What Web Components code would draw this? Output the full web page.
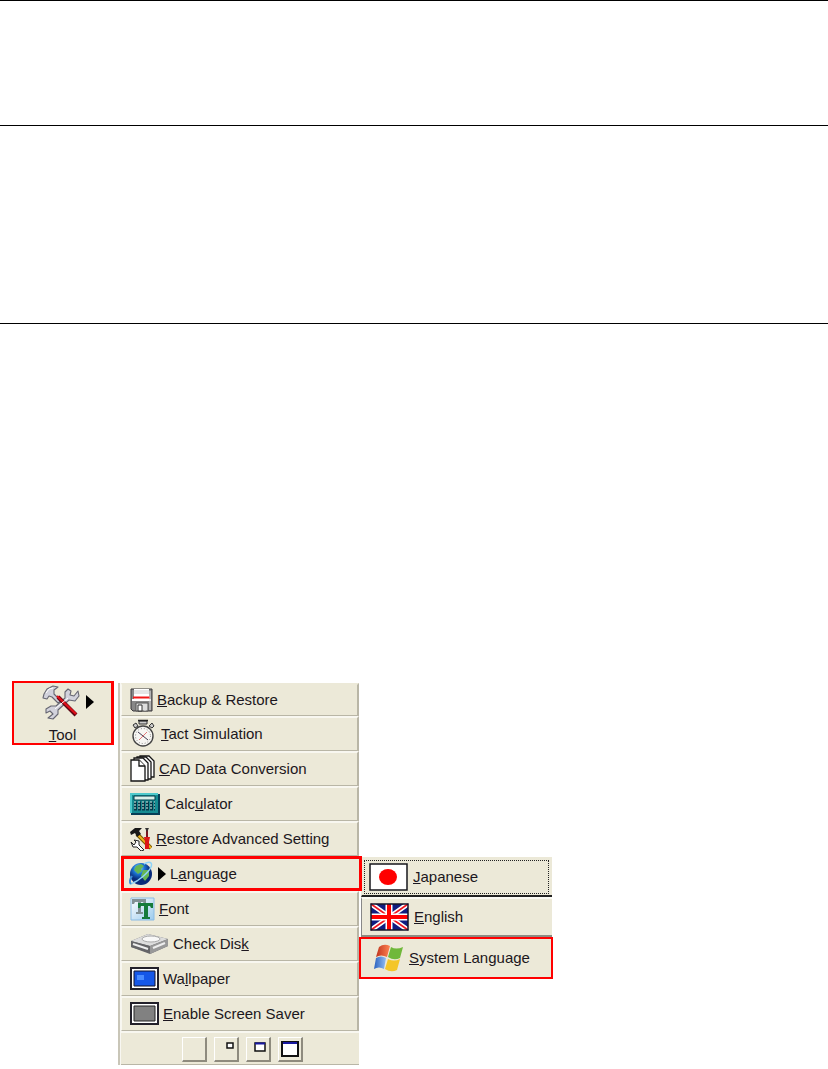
<!DOCTYPE html>
<html lang="en">
<head>
<meta charset="utf-8">
<title>Tool menu – Language</title>
<style>
  body { margin: 0; background: #fff; color: #1c1720; font: 15px/20px "Liberation Sans", Arial, sans-serif; }
</style>
</head>
<body>
<manual-page></manual-page>
<script>
const ICONS = {
  wrench: [40, 36, `<g stroke="#666672" stroke-width="1.1" fill="#d2d2dc" stroke-linejoin="round">
    <path d="M3 10 6 5 12 2 17 3 13 6 13 10 17 14 20 17 17 19 11 13 8 12 6 15 2 14Z"/>
    <path d="M27 5 30 7 29 11 33 12 37 7 38 12 34 17 28 16 17 26 17 30 12 35 7 34 12 30 9 27 5 29 5 25 10 22 15 22 24 14 24 8Z"/></g>
    <path d="M17 13 35 31" stroke="#5c0614" stroke-width="4"/><path d="M16 12 35 30" stroke="#df1019" stroke-width="2.4"/>
    <path d="M5 9 8 5 12 4M14 25 27 14" stroke="#fff" fill="none"/>`],
  floppy: [23, 24, `<path d="M1 1H22V23H3L1 21Z" fill="#888" stroke="#39373b"/><path d="M4 1H19V12H4Z" fill="#fff"/><path d="M4 3H19M4 5H19" stroke="#ccc"/><path d="M3 9.5H20" stroke="#f21818" stroke-width="2"/><path d="M2 12H21" stroke="#fff" stroke-width="2"/><path d="M6 15H18V23H6Z" fill="#ddd" stroke="#555"/><path d="M8 17H12V23H8Z" fill="#fff" stroke="#333"/><path d="M15 16V23M20 3V22" stroke="#ddd"/>`],
  watch: [27, 29, `<path d="M9 2H17V5H9ZM3 6 6 4 8 7 5 9ZM19 7 22 4 24 7 22 9Z" fill="#ccc" stroke="#333"/><circle cx="13" cy="17" r="10" fill="#f7f6f3" stroke="#444" stroke-width="1.4"/><circle cx="13" cy="17" r="7.5" fill="none" stroke="#888" stroke-dasharray="1 2"/><path d="m8 13 10 8" stroke="#433a50"/><path d="m9 21 8-8" stroke="#e37878"/><path d="M8 1.5H18" stroke="#222" stroke-width="1.5"/>`],
  pages: [25, 27, `<g fill="#fff" stroke="#151515" stroke-width="1.3"><path d="M10 1H19L24 6V22H10Z"/><path d="M7 2H16L21 7V24H7Z"/><path d="M4 3H13L18 8V25H4Z"/><path d="M1 5H9L15 11V26H1Z"/><path d="M9 5V11H15"/></g>`],
  calculator: [31, 22, `<path d="M1 1H28V20H1Z" fill="#168c92"/><path d="M1 20V1H28" fill="none" stroke="#4fc9cc" stroke-width="2"/><path d="M1 21H29V1" fill="none" stroke="#073e56" stroke-width="2"/><path d="M4 3H25V7H4Z" fill="#d9efea" stroke="#033c4b"/><path d="M4 10H25M4 13H25M4 16H25" stroke="#06384a" stroke-width="3" stroke-dasharray="3 1"/><path d="M4 9H25M4 12H25M4 15H25" stroke="#dff9ed" stroke-dasharray="2 2"/>`],
  hammer: [22, 24, `<path d="M7 7 21 21" stroke="#755a00" stroke-width="4"/><path d="M7 7 21 21" stroke="#efb31d" stroke-width="2"/><path d="M0 5 5 1H12L9 4 11 7 7 10 5 6 1 8Z" fill="#181818"/><path d="M1 15 4 18 6 15 4 13 9 14 9 18 14 23 11 24 7 20 3 20Z" fill="#fff" stroke="#222"/><path d="M17 3V12" stroke="#7a1721" stroke-width="2"/><path d="M14 10H20L19 15V22H15V15Z" fill="#dd1717"/><path d="M15 1H19L17 5Z" fill="#333"/>`],
  globe: [25, 26, `<defs><radialGradient id="sea" cx=".4" cy=".25"><stop stop-color="#9de2ff"/><stop offset=".5" stop-color="#1c76d4"/><stop offset="1" stop-color="#082b79"/></radialGradient></defs><circle cx="12" cy="13" r="11" fill="url(#sea)"/><path d="M7 5 12 3 15 5 12 8 13 10 9 13 5 9ZM14 9 20 9 20 15 16 20 12 15Z" fill="#65b653"/><path d="M15 3C20 0 24 1 22 6S10 20 2 23" fill="none" stroke="#8fd4f8" stroke-width="1.5"/><path d="M2 23C0 21 1 18 3 15" fill="none" stroke="#3a8cd8" stroke-width="2"/>`],
  font: [25, 24, `<defs><linearGradient id="tile" x2="1" y2="1"><stop stop-color="#fff"/><stop offset="1" stop-color="#9ccbed"/></linearGradient></defs><path d="M1 1H24V23H1Z" fill="url(#tile)" stroke="#8abce5"/><path d="M2 2H16V7H14L13 5H11V15H13V17H6V15H8V5H5L4 7H2Z" fill="#829195"/><path d="M8 6H23V11H21L20 9H18V20H20V22H12V20H14V9H11L10 11H8Z" fill="#167b3b"/>`],
  disk: [39, 22, `<path d="M1 8 18 1 38 6V13L20 21 1 14Z" fill="#66666a"/><path d="M1 8 18 1 38 6 20 13Z" fill="#ddd"/><path d="M20 13 38 6V13L20 21Z" fill="#999"/><path d="M1 8 20 13V20L1 14Z" fill="#656568"/><ellipse cx="21" cy="6" rx="9" ry="3" fill="#f8f8f8" stroke="#aaa"/><path d="M23 15 35 10M3 11 18 16" stroke="#eee" stroke-width="2"/>`],
  wallpaper: [29, 23, `<path d="M1 1H28V22H1Z" fill="#fff" stroke="#22202a" stroke-width="2"/><path d="M4 4H25V19H4Z" fill="#1557e8" stroke="#14142a"/><path d="M7 8H14V13H7Z" fill="#4a8cff"/>`],
  saver: [29, 23, `<path d="M1 1H28V22H1Z" fill="#fff" stroke="#22202a" stroke-width="2"/><path d="M4 4H25V19H4Z" fill="#818181" stroke="#252525"/>`],
  arrow: [8, 14, `<path d="M0 0 8 7 0 14Z" fill="#000"/>`],
  japan: [39, 28, `<path d="M1 1H38V27H1Z" fill="#fff" stroke="#17171c" stroke-width="1.5"/><ellipse cx="19" cy="14" rx="9" ry="8" fill="#f00"/>`],
  uk: [39, 28, `<path d="M1 1H38V27H1Z" fill="#101c80"/><path d="M1 1 38 27M38 1 1 27" stroke="#fff" stroke-width="5"/><path d="M1 1 38 27M38 1 1 27" stroke="#f01520" stroke-width="1.6"/><path d="M19 1V27M1 14H38" stroke="#fff" stroke-width="7"/><path d="M19 1V27M1 14H38" stroke="#f00" stroke-width="4"/><path d="M1 1H38V27H1Z" fill="none" stroke="#151329" stroke-width="1.5"/>`],
  windows: [30, 28, `<defs><linearGradient id="r"><stop stop-color="#bf341e"/><stop offset="1" stop-color="#ff8352"/></linearGradient><linearGradient id="b"><stop stop-color="#2b62bf"/><stop offset="1" stop-color="#91bdf3"/></linearGradient></defs><path d="M5 3Q10-1 16 2L13 13Q7 10 2 13Z" fill="url(#r)"/><path d="M17 3Q22 6 29 3L26 14Q20 17 14 13Z" fill="#70b83b"/><path d="M2 14Q7 11 12 14L10 25Q5 22 0 25Z" fill="url(#b)"/><path d="M14 15Q20 18 26 15L23 26Q17 29 11 25Z" fill="#f4c629"/>`],
  none: [18, 18, ``],
  small: [18, 18, `<path d="M10 3H16V8H10Z" fill="#fff" stroke="#111" stroke-width="1.5"/>`],
  medium: [18, 18, `<path d="M6 3H16V11H6Z" fill="#fff" stroke="#111" stroke-width="1.5"/><path d="M6 3.5H16" stroke="#1818a0" stroke-width="2"/>`],
  large: [18, 18, `<path d="M1 2H17V16H1Z" fill="#fff" stroke="#111" stroke-width="2"/><path d="M2 3H16" stroke="#1818a0" stroke-width="2"/>`]
};

class UiIcon extends HTMLElement {
  connectedCallback() {
    const [w, h, art] = ICONS[this.getAttribute("name")];
    this.attachShadow({ mode: "open" }).innerHTML =
      `<style>:host{display:block;flex:none}svg{display:block}</style><svg width="${w}" height="${h}" viewBox="0 0 ${w} ${h}" aria-hidden="true">${art}</svg>`;
  }
}
customElements.define("ui-icon", UiIcon);

class ToolButton extends HTMLElement {
  connectedCallback() {
    this.attachShadow({ mode: "open" }).innerHTML = `<style>
      :host{display:block}
      button{display:block;width:102px;height:64px;padding:0;background:#ece9d8;border:2px solid #f00;border-right-width:3px;font:inherit;color:inherit}
      .art{display:flex;align-items:center;justify-content:center;gap:5px;padding-left:10px;height:38px}
      .label{display:block;text-align:center;padding:4px 0 0}
    </style><button aria-haspopup="menu"><span class="art"><ui-icon name="wrench"></ui-icon><ui-icon name="arrow"></ui-icon></span><span class="label"><slot></slot></span></button>`;
  }
}
customElements.define("tool-button", ToolButton);

class MenuItem extends HTMLElement {
  connectedCallback() {
    const arrow = this.hasAttribute("submenu") ? '<ui-icon name="arrow"></ui-icon>' : "";
    this.attachShadow({ mode: "open" }).innerHTML = `<style>
      :host{display:block}
      button{box-sizing:border-box;display:flex;align-items:center;gap:4px;width:100%;height:35px;margin:0;padding:0 0 1px 8px;
        background:#ece9d8;border:solid;border-width:2px 2px 1px 1px;border-color:#f8f7f0 #b9b6a6 #b9b6a6 #f8f7f0;color:inherit;font:inherit;white-space:nowrap}
      :host(:first-child) button{height:33px;border-top-color:#ece9d8}
      :host([marked]) button{border:3px solid #f00;padding:0 0 0 5px}
    </style><button role="menuitem"><ui-icon name="${this.getAttribute("icon")}"></ui-icon>${arrow}<span><slot></slot></span></button>`;
  }
}
customElements.define("menu-item", MenuItem);

class LanguageItem extends HTMLElement {
  connectedCallback() {
    this.attachShadow({ mode: "open" }).innerHTML = `<style>
      :host{display:block}
      button{box-sizing:border-box;display:flex;align-items:center;gap:5px;width:100%;height:40px;padding:0 0 0 8px;
        background:#ece9d8;border:solid;border-width:2px 0 2px 1px;border-color:#faf9f3 #bbb #8d8b82 #888;color:inherit;font:inherit;white-space:nowrap}
      :host([current]) button{border-bottom-color:#222;border-left-color:#ece9d8;border-top-color:#ece9d8;padding-left:7px;outline:1px dotted #222;outline-offset:-4px}
      :host([marked]) button{width:auto;min-width:calc(100% + 3px);height:42px;margin:0 -1px 0 -2px;border:2px solid #f00;padding-left:13px}
    </style><button role="menuitem"><ui-icon name="${this.getAttribute("icon")}"></ui-icon><span><slot></slot></span></button>`;
  }
}
customElements.define("language-item", LanguageItem);

class SizeButtons extends HTMLElement {
  connectedCallback() {
    const names = ["none", "small", "medium", "large"];
    this.attachShadow({ mode: "open" }).innerHTML = `<style>
      :host{box-sizing:border-box;display:flex;justify-content:center;gap:7px;height:34px;padding:4px 0 0 5px;background:#ece9d8;border-top:2px solid #f8f7f0;border-bottom:1px solid #b9b6a6}
      button{box-sizing:border-box;display:grid;place-items:center;width:25px;height:25px;padding:0;background:#ece9d8;border:solid;border-width:1px 2px 2px 1px;border-color:#fff #8e8b7e #8e8b7e #fff}
    </style>` + names.map(n => `<button aria-label="${n} window"><ui-icon name="${n}"></ui-icon></button>`).join("");
  }
}
customElements.define("size-buttons", SizeButtons);

class ManualPage extends HTMLElement {
  connectedCallback() {
    this.attachShadow({ mode: "open" }).innerHTML = `<style>
      :host{display:block}
      section{box-sizing:border-box;border-top:1px solid #000}
      .head{min-height:125px}
      .intro{min-height:198px}
      .body{padding:357px 12px 4px}
      .menus{display:flex;align-items:flex-start}
      .main{width:238px;margin:2px 0 0 4px;padding-left:1px;border-left:2px solid #c9c6b8;background:#f8f7f2}
      .main menu-item[marked]{margin-right:-3px;position:relative}
      .sub{width:191px;margin:176px 0 0 2px}
    </style>
    <section class="head"></section>
    <section class="intro"></section>
    <section class="body"><div class="menus">
      <tool-button><u>T</u>ool</tool-button>
      <div class="main" role="menu">
        <menu-item icon="floppy"><u>B</u>ackup &amp; Restore</menu-item>
        <menu-item icon="watch"><u>T</u>act Simulation</menu-item>
        <menu-item icon="pages"><u>C</u>AD Data Conversion</menu-item>
        <menu-item icon="calculator">Calc<u>u</u>lator</menu-item>
        <menu-item icon="hammer"><u>R</u>estore Advanced Setting</menu-item>
        <menu-item icon="globe" submenu marked>L<u>a</u>nguage</menu-item>
        <menu-item icon="font"><u>F</u>ont</menu-item>
        <menu-item icon="disk">Check Dis<u>k</u></menu-item>
        <menu-item icon="wallpaper">Wa<u>l</u>lpaper</menu-item>
        <menu-item icon="saver"><u>E</u>nable Screen Saver</menu-item>
        <size-buttons></size-buttons>
      </div>
      <div class="sub" role="menu">
        <language-item icon="japan" current><u>J</u>apanese</language-item>
        <language-item icon="uk"><u>E</u>nglish</language-item>
        <language-item icon="windows" marked><u>S</u>ystem Language</language-item>
      </div>
    </div></section>`;
  }
}
customElements.define("manual-page", ManualPage);
</script>
</body>
</html>
